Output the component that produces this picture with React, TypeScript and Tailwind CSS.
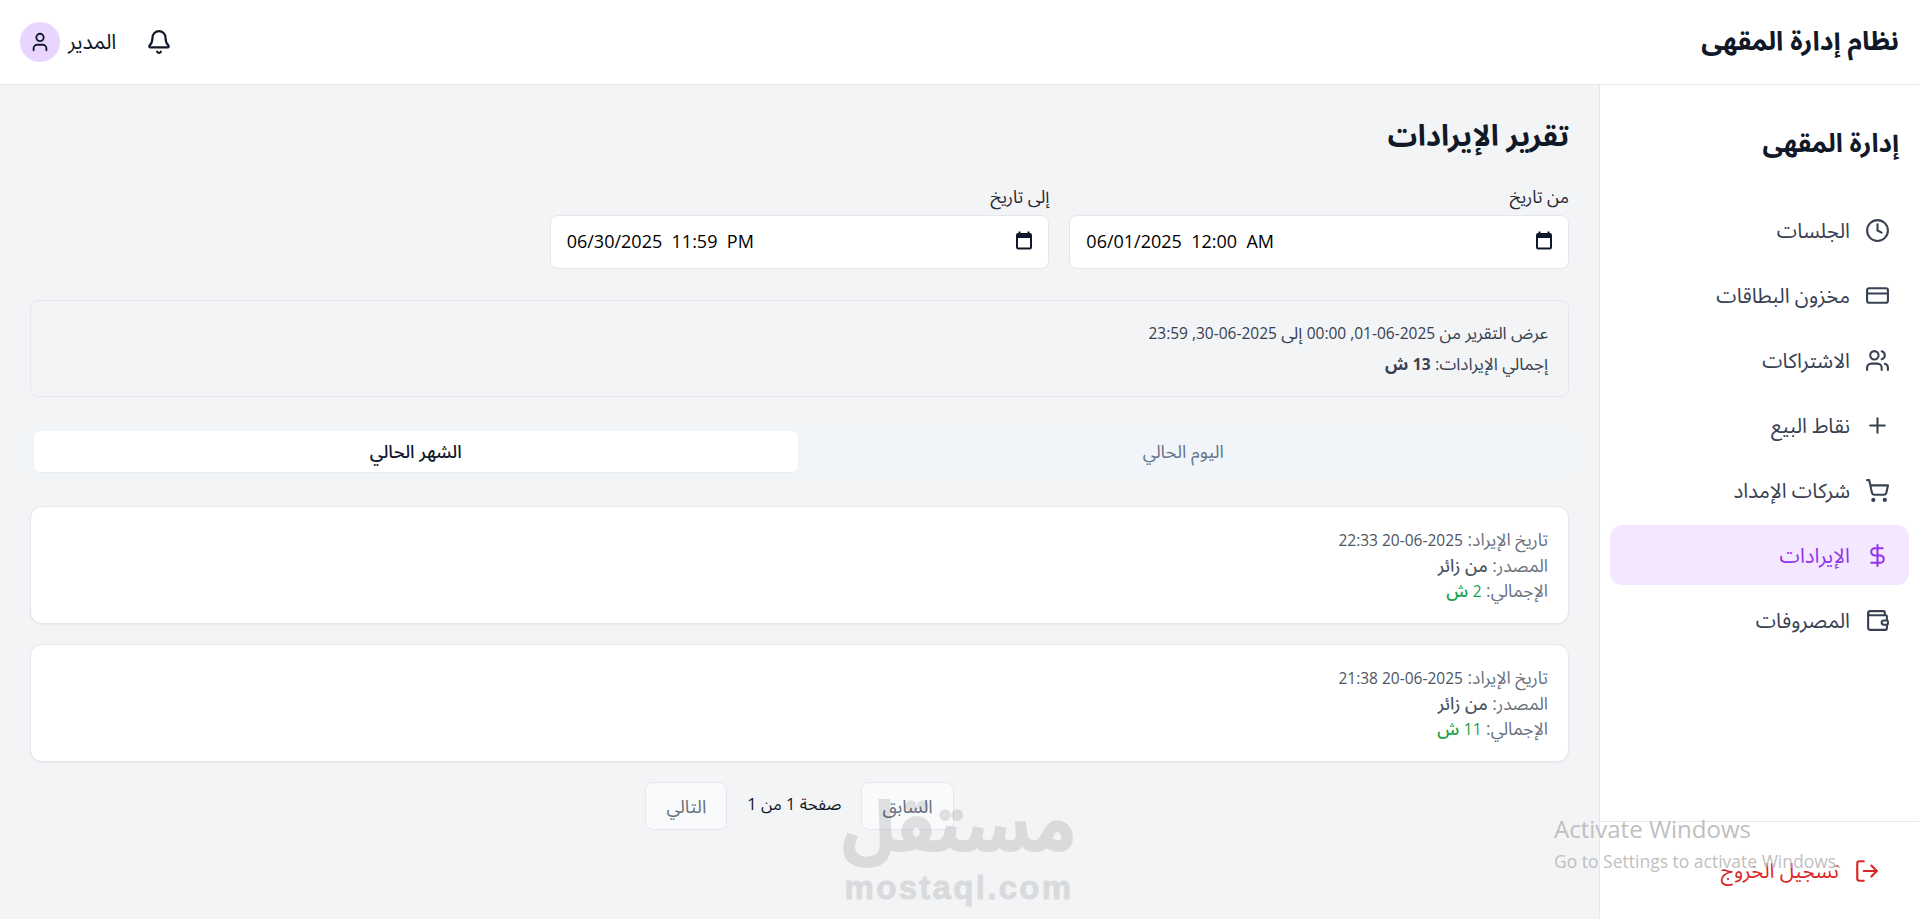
import { Bell, User, Clock, CreditCard, Users, Plus, ShoppingCart, DollarSign, Wallet, LogOut } from "lucide-react";

const font = "font-['Open_Sans','Noto_Sans','Noto_Sans_Arabic',sans-serif]";

const nav = [
  { label: "الجلسات", Icon: Clock },
  { label: "مخزون البطاقات", Icon: CreditCard },
  { label: "الاشتراكات", Icon: Users },
  { label: "نقاط البيع", Icon: Plus },
  { label: "شركات الإمداد", Icon: ShoppingCart },
  { label: "الإيرادات", Icon: DollarSign, active: true },
  { label: "المصروفات", Icon: Wallet },
];

const entries = [
  { date: "2025-06-20 22:33", total: "2" },
  { date: "2025-06-20 21:38", total: "11" },
];

function DateField({ label, value }: { label: string; value: string }) {
  return (
    <div>
      <label className="block text-[17.5px] leading-5 text-[#1f2937] mb-[9px]">{label}</label>
      <div className="relative">
        <input
          type="text"
          dir="ltr"
          readOnly
          value={value}
          className="w-full h-[54px] px-4 pb-[2px] bg-white border border-[#e5e7eb] rounded-lg text-[18px] text-[#000] outline-none"
        />
        <svg viewBox="0 0 16 19" className="absolute right-[17px] top-[16px] w-4 h-[19px]" fill="none">
          <path d="M3.5 0.5v3M12.5 0.5v3" stroke="#0f172a" strokeWidth="2" />
          <rect x="1" y="3" width="14" height="14.5" rx="1.2" stroke="#0f172a" strokeWidth="2" />
          <path d="M1 5.5h14" stroke="#0f172a" strokeWidth="3" />
        </svg>
      </div>
    </div>
  );
}

export default function App() {
  return (
    <div dir="rtl" className={`${font} relative h-[919px] overflow-hidden bg-[#f3f4f6] text-[#111827] flex flex-col`}>
      <header className="h-[85px] shrink-0 bg-white border-b border-[#e5e7eb] flex items-center justify-between px-5">
        <h1 className="text-[26.5px] font-bold pb-[2px]">نظام إدارة المقهى</h1>
        <div className="flex items-center gap-[30px]">
          <Bell size={26} strokeWidth={2} />
          <div className="flex items-center gap-2">
            <span className="text-[21px]">المدير</span>
            <div className="w-10 h-10 rounded-full bg-[#e9d5ff] flex items-center justify-center">
              <User size={22} strokeWidth={2} />
            </div>
          </div>
        </div>
      </header>
      <div className="flex-1 flex min-h-0">
        <aside className="w-80 shrink-0 bg-white border-l border-[#e5e7eb] flex flex-col">
          <div className="flex-1 px-[10px]">
            <h2 className="text-[26px] font-bold h-[28px] leading-7 mt-[43px] mb-[44px] px-[10px]">إدارة المقهى</h2>
            <nav className="flex flex-col gap-[5px]">
              {nav.map(({ label, Icon, active }) => (
                <a
                  key={label}
                  className={`h-[60px] rounded-xl flex items-center gap-[15px] px-[19px] text-[20.5px] ${active ? "bg-[#f3e8ff] text-[#9333ea]" : "text-[#374151]"}`}
                >
                  <Icon size={25} strokeWidth={2} />
                  <span>{label}</span>
                </a>
              ))}
            </nav>
          </div>
          <div className="h-[98px] border-t border-[#e5e7eb] flex items-center px-[39px] gap-[15px] text-[20.5px] text-[#dc2626]">
            <LogOut size={26} strokeWidth={2} />
            <span>تسجيل الخروج</span>
          </div>
        </aside>
        <main className="flex-1 px-[30px] pt-[30px]">
          <h2 className="text-[29.5px] leading-10 font-bold mb-[31px]">تقرير الإيرادات</h2>
          <div className="grid grid-cols-3 gap-5">
            <DateField label="من تاريخ" value="06/01/2025  12:00  AM" />
            <DateField label="إلى تاريخ" value="06/30/2025  11:59  PM" />
          </div>
          <section className="mt-[31px] h-[97px] border border-[#e5e7eb] rounded-lg px-5 pt-[20px] text-[17px] text-[#374151]">
            <p className="h-[31px] leading-6">عرض التقرير من <span className="text-[15.5px]">2025-06-01, 00:00</span> إلى <span className="text-[15.5px]">2025-06-30, 23:59</span></p>
            <p className="leading-6">إجمالي الإيرادات: <strong><span className="text-[15.5px]">13</span> ش</strong></p>
          </section>
          <div className="mt-[30px] h-[49px] rounded-lg bg-[#f1f5f9] p-1 grid grid-cols-2 gap-1 text-[18px]">
            <button className="rounded-md text-[#64748b]">اليوم الحالي</button>
            <button className="rounded-md bg-white font-medium text-[#0f172a] shadow-xs">الشهر الحالي</button>
          </div>
          <div className="mt-[30px] flex flex-col gap-5">
            {entries.map((e) => (
              <article key={e.date} className="h-[118px] bg-white rounded-xl border border-[#e5e7eb] shadow-xs p-5 text-[17.5px] leading-[25px] text-[#6b7280]">
                <p>تاريخ الإيراد: <span className="font-medium text-[15.5px] text-[#4b5563]">{e.date}</span></p>
                <p>المصدر: <span className="font-medium text-[#4b5563]">من زائر</span></p>
                <p>الإجمالي: <span className="font-medium text-[#16a34a]"><span className="text-[15.5px]">{e.total}</span> ش</span></p>
              </article>
            ))}
          </div>
          <div className="mt-[20px] flex items-start justify-center gap-5">
            <button className="h-12 px-5 rounded-lg border border-[#e5e7eb] bg-white/50 text-[18.5px] text-[#6b7280]">السابق</button>
            <span className="text-[16.5px] leading-[44px] text-[#111827]">صفحة 1 من 1</span>
            <button className="h-12 px-5 rounded-lg border border-[#e5e7eb] bg-white/50 text-[18.5px] text-[#6b7280]">التالي</button>
          </div>
        </main>
      </div>
      <div dir="ltr" className="absolute left-[842px] top-[780px] w-[234px] flex flex-col items-center text-[#000] opacity-10 font-bold pointer-events-none">
        <span dir="rtl" className="text-[70px] leading-[88px] font-bold [-webkit-text-stroke:2px_#000]">مستقل</span>
        <span className="mt-[3px] text-[33px] leading-[34px] tracking-[2.3px] [-webkit-text-stroke:1px_#000] font-['Liberation_Sans',sans-serif]">mostaql.com</span>
      </div>
      <div dir="ltr" className="absolute left-[1554px] top-[813px] text-[#bfbfbf] pointer-events-none font-['Open_Sans',sans-serif]">
        <div className="text-2xl leading-8">Activate Windows</div>
        <div className="text-[17.5px] leading-5 mt-[6px]">Go to Settings to activate Windows.</div>
      </div>
    </div>
  );
}
